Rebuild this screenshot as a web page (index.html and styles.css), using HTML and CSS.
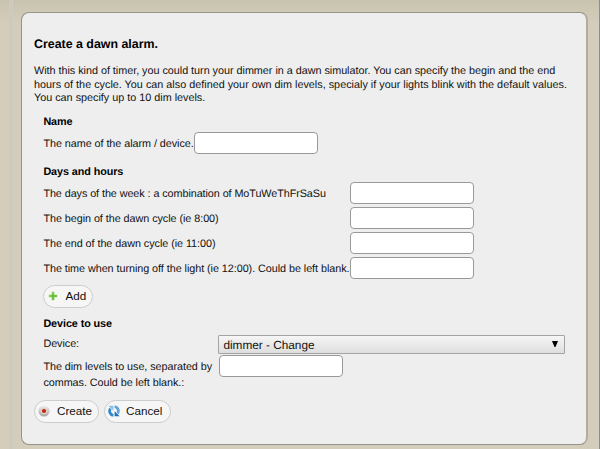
FILE: index.html
```
<!DOCTYPE html>
<html lang="en">
<head>
<meta charset="utf-8">
<title>Create a dawn alarm</title>
<link rel="stylesheet" href="styles.css">
</head>
<body>
<main class="page">
<form class="panel">
  <h1 class="title">Create a dawn alarm.</h1>
  <p class="intro"><span class="l1">With this kind of timer, you could turn your dimmer in a dawn simulator. You can specify the begin and the end</span><br><span class="l2">hours of the cycle. You can also defined your own dim levels, specialy if your lights blink with the default values.</span><br>You can specify up to 10 dim levels.</p>
  <section class="group name">
    <h2>Name</h2>
    <label class="row"><span>The name of the alarm / device.</span><input type="text"></label>
  </section>
  <section class="group hours">
    <h2>Days and hours</h2>
    <label class="row"><span class="days">The days of the week : a combination of MoTuWeThFrSaSu</span><input type="text"></label>
    <label class="row"><span>The begin of the dawn cycle (ie 8:00)</span><input type="text"></label>
    <label class="row"><span>The end of the dawn cycle (ie 11:00)</span><input type="text"></label>
    <label class="row"><span>The time when turning off the light (ie 12:00). Could be left blank.</span><input type="text"></label>
    <button type="button" class="btn add"><svg viewBox="0 0 12 12"><path d="M6 1.8v8.4M1.8 6h8.4" stroke="#86d152" stroke-width="2.6"/><path d="M6 4v6M4 6h6" stroke="#62bd31" stroke-width="1.4"/></svg>Add</button>
  </section>
  <section class="group device">
    <h2>Device to use</h2>
    <div class="row pick"><span>Device:</span><div class="select"><span>dimmer - Change</span><svg viewBox="0 0 6 6"><path d="M0 0h6L3.5 6H2.5z"/></svg></div></div>
    <label class="row levels"><span>The dim levels to use, separated by<br>commas. Could be left blank.:</span><input type="text"></label>
  </section>
  <div class="actions">
    <button type="button" class="btn create"><svg viewBox="0 0 12 12"><defs><linearGradient id="disc" x2="0" y2="1"><stop stop-color="#f0f0f0"/><stop offset="1" stop-color="#a4a4a4"/></linearGradient></defs><circle cx="6" cy="6" r="5.6" fill="url(#disc)"/><circle cx="6" cy="6" r="3.3" fill="#e2cfc8"/><circle cx="6" cy="6" r="2.1" fill="#bf2a0c"/></svg>Create</button>
    <button type="button" class="btn cancel"><svg viewBox="0 0 12 12"><path d="M5.4 10.4A4.4 4.4 0 0 1 2.4 3.6" fill="none" stroke="#3389ca" stroke-width="2.8"/><path d="M.4 .8h5v5z" fill="#8abfe5"/><path d="M6.6 1.6A4.4 4.4 0 0 1 9.6 8.4" fill="none" stroke="#5fa5da" stroke-width="2.8"/><path d="M11.6 11.2h-5v-5z" fill="#1871b9"/></svg>Cancel</button>
  </div>
</form>
</main>
</body>
</html>
```

FILE: styles.css
```
* { box-sizing: border-box; }
body {
  margin: 0;
  font: 10.8px/13.5px "Liberation Sans", Arial, sans-serif;
  text-rendering: geometricPrecision;
  color: #111;
}
.page {
  height: 449px;
  padding: 12px 12px 4px 21px;
  overflow: hidden;
  background:
    linear-gradient(#8f8e88, #8f8e88) 599px 0 / 1px 100% no-repeat,
    linear-gradient(90deg, #d0ccbd, #cbc9bf, #d0ccbd) 9px 0 / 4px 100% no-repeat,
    linear-gradient(#c8c3af, #d4cdbc 24px);
}
.panel {
  height: 433px;
  width: 567px;
  padding: 24px 12px 0;
  border: 1px solid #96948a;
  border-right: 2px solid #afada1;
  border-radius: 8px;
  background: #eee;
}
h1, h2, p { margin: 0; }
.title { font-size: 12.4px; line-height: 14px; color: #000; }
.intro { margin-top: 14px; white-space: nowrap; }
.l1 { letter-spacing: -.02px; }
.l2 { letter-spacing: .01px; }
h2 { font-size: 10.8px; line-height: 14px; letter-spacing: -.08px; color: #000; }
.group { padding-left: 9.4px; }
.row {
  display: grid;
  align-items: center;
  height: 25px;
  letter-spacing: -.05px;
  white-space: nowrap;
}
.days { letter-spacing: -.07px; }
input {
  width: 124px;
  height: 22px;
  padding: 0;
  border: 1px solid #999;
  border-radius: 4px;
  background: #fff;
}
.name { margin-top: 9px; }
.name .row { grid-template-columns: 150.5px 124px; margin-top: 2px; }
.name .row span, .hours .row span { padding-top: 3px; }
.hours { margin-top: 9px; }
.hours .row { grid-template-columns: 306.5px 124px; }
.hours h2 { margin-bottom: 2px; }
.btn {
  display: inline-flex;
  align-items: center;
  height: 23px;
  padding: 0 0 0 3px;
  border: 1px solid #ccc;
  border-radius: 12px;
  background: #f6f6f6;
  font: 11.7px/14px "Liberation Sans", Arial, sans-serif;
  color: #111;
}
.btn svg { width: 12px; height: 12px; margin-right: 7px; }
.add { display: flex; width: 50px; margin-top: 4px; }
.add svg { margin-right: 6px; }
.device { margin-top: 9px; }
.device .row { grid-template-columns: 175px 347px; }
.device .pick { height: 19px; margin-top: 4px; }
.pick > span { padding-top: 1px; }
.device .levels { grid-template-columns: 175.6px 124px; height: 36px; align-items: start; margin-top: 1px; line-height: 16px; }
.levels span { padding-top: 4px; }
.select {
  display: flex;
  align-items: center;
  justify-content: space-between;
  height: 19px;
  padding: 2px 6px 0 4px;
  border: 1px solid #a4a4a4;
  border-radius: 1px;
  background: linear-gradient(#f6f6f6, #dedede);
  font-size: 11.8px;
  letter-spacing: 0;
}
.select span { padding-top: 1px; }
.select svg { width: 6px; height: 6px; margin-bottom: 3px; }
.actions { display: flex; gap: 5px; margin-top: 9px; }
.create { width: 65px; }
.cancel { width: 67px; }
.cancel svg { margin-right: 6px; }
```
